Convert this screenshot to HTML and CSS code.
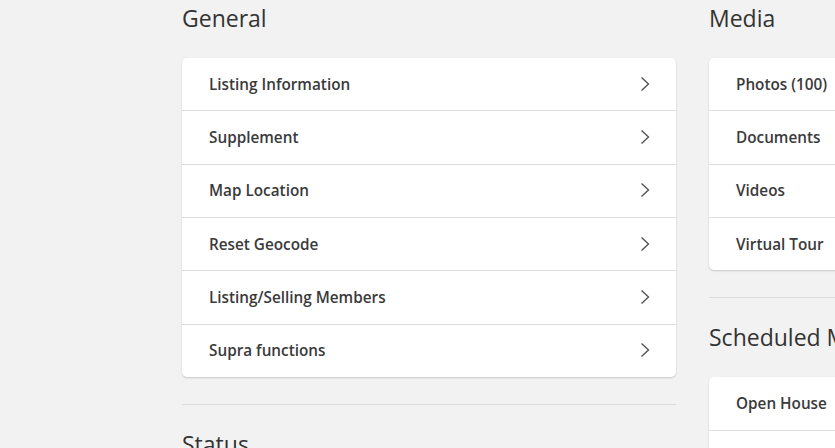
FILE: index.html
```html
<!DOCTYPE html>
<html lang="en">
<head>
<meta charset="utf-8">
<title>Listing</title>
<link rel="stylesheet" href="styles.css">
</head>
<body>
<div class="page">
  <div class="column">
    <section class="group">
      <h2 class="heading">General</h2>
      <div class="card">
        <a class="row"><span>Listing Information</span><svg class="chev" viewBox="0 0 10 16"><polyline points="1.5,1.5 8.5,8 1.5,14.5"/></svg></a>
        <a class="row"><span>Supplement</span><svg class="chev" viewBox="0 0 10 16"><polyline points="1.5,1.5 8.5,8 1.5,14.5"/></svg></a>
        <a class="row"><span>Map Location</span><svg class="chev" viewBox="0 0 10 16"><polyline points="1.5,1.5 8.5,8 1.5,14.5"/></svg></a>
        <a class="row"><span>Reset Geocode</span><svg class="chev" viewBox="0 0 10 16"><polyline points="1.5,1.5 8.5,8 1.5,14.5"/></svg></a>
        <a class="row"><span>Listing/Selling Members</span><svg class="chev" viewBox="0 0 10 16"><polyline points="1.5,1.5 8.5,8 1.5,14.5"/></svg></a>
        <a class="row"><span>Supra functions</span><svg class="chev" viewBox="0 0 10 16"><polyline points="1.5,1.5 8.5,8 1.5,14.5"/></svg></a>
      </div>
    </section>
    <hr class="divider">
    <section class="group">
      <h2 class="heading">Status</h2>
    </section>
  </div>
  <div class="column">
    <section class="group">
      <h2 class="heading">Media</h2>
      <div class="card">
        <a class="row"><span>Photos (100)</span></a>
        <a class="row"><span>Documents</span></a>
        <a class="row"><span>Videos</span></a>
        <a class="row"><span>Virtual Tour</span></a>
      </div>
    </section>
    <hr class="divider">
    <section class="group">
      <h2 class="heading">Scheduled Maintenance</h2>
      <div class="card">
        <a class="row"><span>Open House</span></a>
        <a class="row"><span>Showings</span></a>
      </div>
    </section>
  </div>
</div>
</body>
</html>
```

FILE: styles.css
```css
* { box-sizing: border-box; }
html, body {
  margin: 0;
  padding: 0;
  background: #f2f2f2;
  overflow: hidden;
  height: 100%;
}
body {
  font-family: "Open Sans", "Noto Sans", sans-serif;
  color: #333;
}
.page {
  display: grid;
  grid-template-columns: 494px 494px;
  column-gap: 33px;
  padding-left: 182px;
  width: max-content;
}
.heading {
  margin: 0 0 20px 0;
  height: 38px;
  line-height: 36px;
  font-size: 23px;
  font-weight: 500;
  color: #333;
  white-space: nowrap;
}
.card {
  background: #fff;
  border-radius: 5px;
  box-shadow: 0 1px 2px rgba(0,0,0,0.18);
}
.row {
  display: flex;
  align-items: center;
  justify-content: space-between;
  height: 53.33px;
  padding: 0 26px 1px 27px;
  font-size: 15.3px;
  font-weight: 600;
  color: #3a3a3a;
  border-top: 1px solid #dcdcdc;
}
.row:first-child { border-top: none; height: 52.33px; }
.chev {
  width: 10px;
  height: 16px;
  fill: none;
  stroke: #555;
  stroke-width: 1.4;
}
.divider {
  border: none;
  border-top: 1px solid #dcdcdc;
  margin: 27px 0 21px 0;
  height: 0;
}
```
